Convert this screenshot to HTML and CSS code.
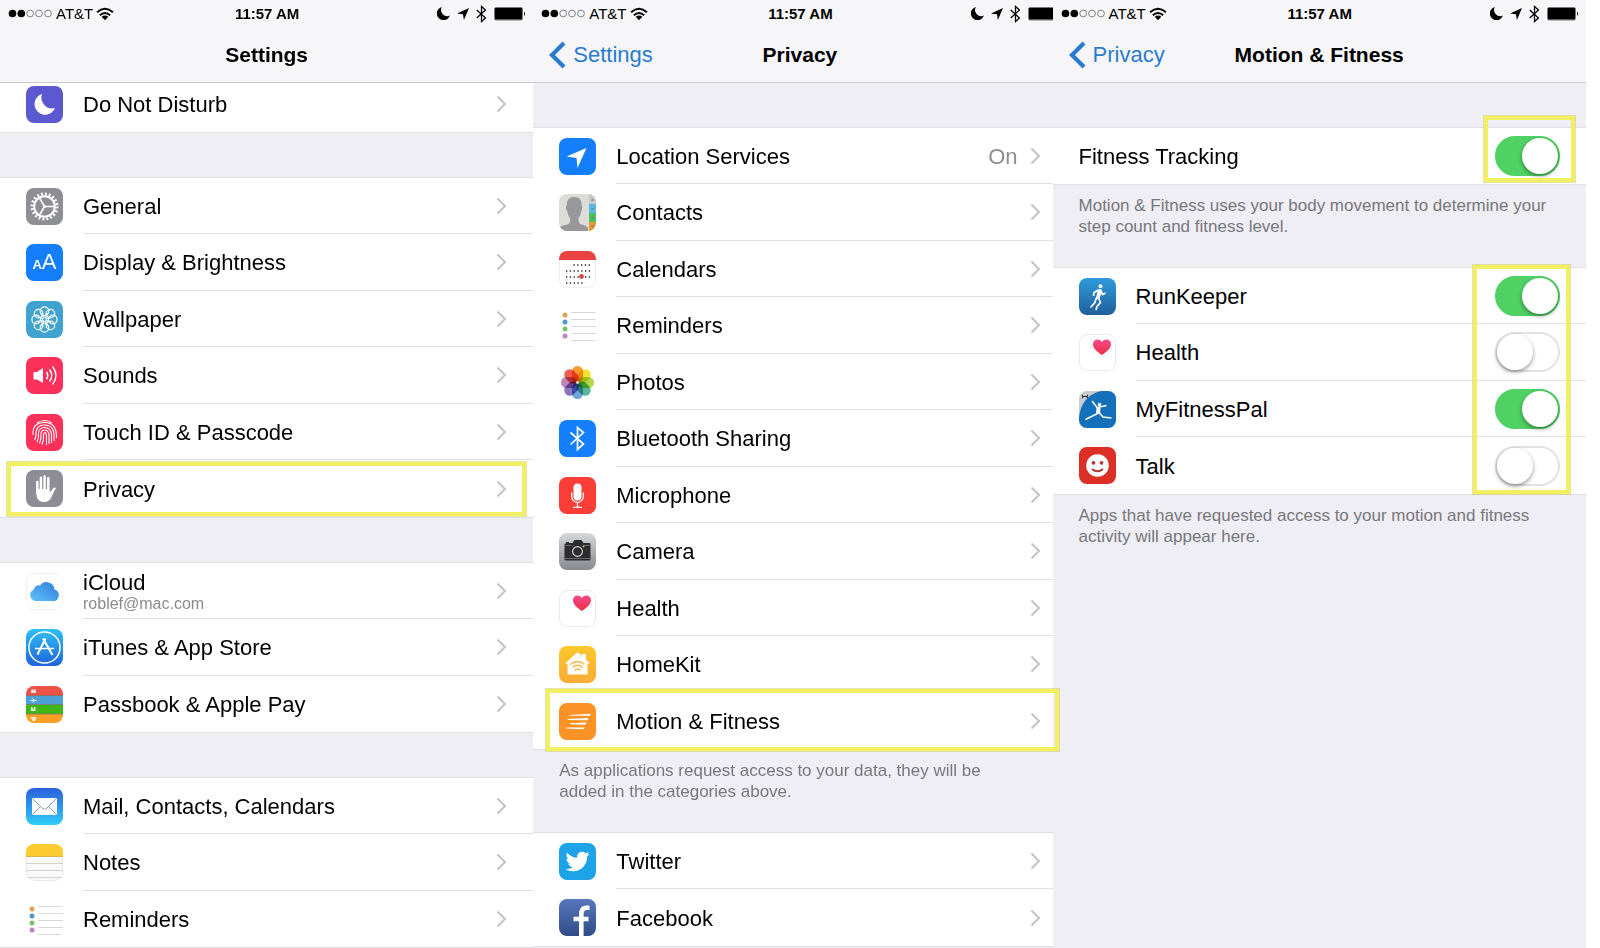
FILE: index.html
```html
<!DOCTYPE html>
<html lang="en">
<head>
    <meta charset="UTF-8">
    <meta name="viewport" content="width=device-width, initial-scale=1.0">
    <title>Motion &amp; Fitness settings</title>
    <link rel="stylesheet" href="styles.css">
</head>
<body>
    <!-- shared icons -->
    <svg class="sprite" aria-hidden="true">
        <defs>
            <linearGradient id="g-cloud" x1="0" y1="1" x2="1" y2="0">
                <stop offset="0" stop-color="#62c0f5"/><stop offset="1" stop-color="#2f7de0"/>
            </linearGradient>
            <linearGradient id="g-store" x1="0" y1="0" x2="0" y2="1">
                <stop offset="0" stop-color="#2fc0f2"/><stop offset="1" stop-color="#2063dc"/>
            </linearGradient>
            <linearGradient id="g-mail" x1="0" y1="0" x2="0" y2="1">
                <stop offset="0" stop-color="#2a5fdc"/><stop offset="1" stop-color="#2fcdf7"/>
            </linearGradient>
            <linearGradient id="g-camera" x1="0" y1="0" x2="0" y2="1">
                <stop offset="0" stop-color="#d6d7da"/><stop offset="1" stop-color="#88898e"/>
            </linearGradient>
            <linearGradient id="g-heart" x1="0" y1="0" x2="0" y2="1">
                <stop offset="0" stop-color="#fb4a8c"/><stop offset="1" stop-color="#e92f45"/>
            </linearGradient>
            <linearGradient id="g-home" x1="0" y1="0" x2="0" y2="1">
                <stop offset="0" stop-color="#fac92c"/><stop offset="1" stop-color="#fbab35"/>
            </linearGradient>
            <linearGradient id="g-fb" x1="0" y1="0" x2="0" y2="1">
                <stop offset="0" stop-color="#5878bd"/><stop offset="1" stop-color="#304c88"/>
            </linearGradient>
            <linearGradient id="g-run" x1="0" y1="0" x2="0" y2="1">
                <stop offset="0" stop-color="#2f9bdc"/><stop offset="1" stop-color="#215f9c"/>
            </linearGradient>
        </defs>
        <symbol id="dots" viewBox="0 0 45 9">
            <circle cx="4.5" cy="4.5" r="3.8"/><circle cx="13.3" cy="4.5" r="3.8"/>
            <g fill="none" stroke="#555" stroke-width=".7"><circle cx="22.2" cy="4.5" r="3.4"/><circle cx="31" cy="4.5" r="3.4"/><circle cx="40" cy="4.5" r="3.4"/></g>
        </symbol>
        <symbol id="wifi" viewBox="0 0 17 13">
            <path d="M1 4.8Q8.500-1.700 16 4.800M3.600 7.600Q8.500 3.300 13.400 7.600" fill="none" stroke="#000" stroke-width="1.800"/>
            <path d="M5.400 9.200Q8.500 6.700 11.600 9.200L8.500 12.500z"/>
        </symbol>
        <symbol id="moon" viewBox="0 0 20 20">
            <path d="M7.500 0A9.500 9.500 0 0 0 19.800 13.200A10.300 10.300 0 1 1 7.500 0z"/>
        </symbol>
        <symbol id="arrow" viewBox="0 0 20 20">
            <path d="M20 0L11.500 20L10 10.500L0 9z"/>
        </symbol>
        <symbol id="bt" viewBox="0 0 14 22">
            <path d="M1 6L12 16L7 20.500V1.500L12 6L1 16" fill="none" stroke="currentColor" stroke-width="1.600"/>
        </symbol>
        <symbol id="battery" viewBox="0 0 32 14">
            <rect x=".5" y=".5" width="28" height="12.500" rx="1.500" fill="#fff" stroke="#777"/>
            <rect x="1" y="1" width="27" height="11.500" rx=".5"/>
            <path d="M30 4.500q2 2.200 0 4.500z"/>
        </symbol>
        <symbol id="back" viewBox="0 0 17 28">
            <path d="M15 2L3 14L15 26" fill="none" stroke="currentColor" stroke-width="4.200"/>
        </symbol>
        <symbol id="chevron" viewBox="0 0 11 18">
            <path d="M1.500 1.500L9 9L1.500 16.500" fill="none" stroke="#c3c3c8" stroke-width="2"/>
        </symbol>

        <symbol id="i-dnd" viewBox="0 0 37 37">
            <rect width="37" height="37" fill="#5b58d0"/>
            <path d="M16 8A10.800 10.800 0 0 0 29 22A10.600 10.600 0 1 1 16 8z" fill="#fff"/>
        </symbol>
        <symbol id="i-general" viewBox="0 0 37 37">
            <rect width="37" height="37" fill="#8e8e95"/>
            <g fill="none" stroke="#fff">
                <circle cx="18.500" cy="18.500" r="12.600" stroke-width="2.800" stroke-dasharray="1.900 2.060"/>
                <circle cx="18.500" cy="18.500" r="10.300" stroke-width="2"/>
                <path d="M18.500 18.500H29M18.500 18.500L13.200 9.300M18.500 18.500L13.200 27.700" stroke-width="1.600"/>
            </g>
            <circle cx="18.500" cy="18.500" r="1.600" fill="#fff"/>
        </symbol>
        <symbol id="i-wallpaper" viewBox="0 0 37 37">
            <rect width="37" height="37" fill="#40a3cf"/>
            <g fill="none" stroke="#fff" stroke-width="1.200">
                <circle cx="18.500" cy="10.200" r="4.300"/><circle cx="24.400" cy="12.600" r="4.300"/>
                <circle cx="26.800" cy="18.500" r="4.300"/><circle cx="24.400" cy="24.400" r="4.300"/>
                <circle cx="18.500" cy="26.800" r="4.300"/><circle cx="12.600" cy="24.400" r="4.300"/>
                <circle cx="10.200" cy="18.500" r="4.300"/><circle cx="12.600" cy="12.600" r="4.300"/>
                <circle cx="18.500" cy="18.500" r="2"/>
                <path d="M15 12L17.700 16.600M22 12L19.300 16.600M15 25L17.700 20.400M22 25L19.300 20.400M12 15L16.600 17.700M12 22L16.600 19.300M25 15L20.400 17.700M25 22L20.400 19.300"/>
            </g>
        </symbol>
        <symbol id="i-sounds" viewBox="0 0 37 37">
            <rect width="37" height="37" fill="#fb3159"/>
            <path d="M7.500 15H11L17 11V26L11 22.500H7.500z" fill="#fff"/>
            <g fill="none" stroke="#fff" stroke-width="1.500">
                <path d="M20.500 15q2.500 3.500 0 7"/><path d="M23.500 12.500q4.500 6 0 12"/><path d="M26.500 9.500q7 9 0 18"/>
            </g>
        </symbol>
        <symbol id="i-touch" viewBox="0 0 37 37">
            <rect width="37" height="37" fill="#fb3159"/>
            <g fill="none" stroke="#fff" stroke-width="1.100">
                <path d="M11 9Q18.500 4 26 9"/>
                <path d="M7 21Q6 8.500 18.500 8.500Q31 8.500 30.500 24"/>
                <path d="M8.500 26Q10.500 23 10 18.500Q10.500 11 18.500 11Q27.500 11 28 20V27"/>
                <path d="M11 28Q13 24 12.500 19Q13 13.500 18.500 13.500Q25 13.500 25.500 21V29"/>
                <path d="M13.500 29.500Q15.500 25 15 19.500Q15.500 16 18.500 16Q22.500 16 23 21V30"/>
                <path d="M16 30.500Q18 26 17.500 20.500Q18 18.500 19 18.500Q20.500 19 20.500 22V31"/>
            </g>
        </symbol>
        <symbol id="i-privacy" viewBox="0 0 37 37">
            <rect width="37" height="37" fill="#8e8c95"/>
            <g fill="none" stroke="#fff" stroke-width="2.500" stroke-linecap="round">
                <path d="M11.300 12V22M14.900 7.800V20M18.600 6.500V20M22.300 8.300V22"/>
            </g>
            <path d="M10 19H23.500V23L27 18.500Q28.500 17 30 18Q27.500 22 25.500 27Q23.500 32 18 32Q12 32 10.500 26z" fill="#fff"/>
        </symbol>
        <symbol id="i-cloud" viewBox="0 0 37 37">
            <rect x=".5" y=".5" width="36" height="36" rx="8" fill="#fff" stroke="#f1f1f3"/>
            <path d="M9.500 28A6 6 0 0 1 7.500 16.700A5.500 5.500 0 0 1 14 12.500A8 8 0 0 1 28.500 16.500A6 6 0 0 1 28.500 28z" fill="url(#g-cloud)"/>
        </symbol>
        <symbol id="i-store" viewBox="0 0 37 37">
            <rect width="37" height="37" fill="url(#g-store)"/>
            <g fill="none" stroke="#fff">
                <circle cx="18.500" cy="18.500" r="15.600" stroke-width="1.500"/>
                <path d="M19.500 9.500L11.500 25.500M17 9.500L26.500 26" stroke-width="2"/>
                <path d="M9 19.500H28" stroke-width="1.700"/>
            </g>
        </symbol>
        <symbol id="i-passbook" viewBox="0 0 37 37">
            <rect width="37" height="10" fill="#ee5148"/><rect y="10" width="37" height="9" fill="#4d9fd4"/>
            <rect y="19" width="37" height="10" fill="#3fb615"/><rect y="28" width="37" height="9" fill="#fb9f27"/>
            <path d="M0 9.500H37M0 18.500H37M0 28H37" stroke="#85766a" stroke-width=".8"/>
            <g fill="#fff" opacity=".8">
                <path d="M5 3.500H10V7H5zM4 14H7L6 11.500L9 14H11V15H9L6.500 17L7 15H4zM5 25V21H6.500V22.500H8V21H9.500V25zM4.500 31H10.500L9 35H6.500z"/>
            </g>
        </symbol>
        <symbol id="i-mail" viewBox="0 0 37 37">
            <rect width="37" height="37" fill="url(#g-mail)"/>
            <rect x="6" y="10" width="25" height="17" rx="1" fill="#fff"/>
            <path d="M6.500 10.500L16.500 20.500Q18.500 22 20.500 20.500L30.500 10.500M6.500 26.500L14.500 18.500M30.500 26.500L22.500 18.500" fill="none" stroke="#7692aa" stroke-width=".9"/>
        </symbol>
        <symbol id="i-notes" viewBox="0 0 37 37">
            <rect x=".5" y=".5" width="36" height="36" rx="8" fill="#f9f9f9" stroke="#e9e9e9"/>
            <rect width="37" height="12" fill="#fccb2f"/>
            <path d="M0 12.500H37" stroke="#d9b448"/>
            <path d="M0 19.500H37M0 26.500H37M0 33.500H37" stroke="#d2d2d2"/>
        </symbol>
        <symbol id="i-reminders" viewBox="0 0 37 37">
            <circle cx="6" cy="8" r="2.500" fill="#dca64e"/><circle cx="6" cy="15" r="2.500" fill="#4b9cca"/>
            <circle cx="6" cy="22" r="2.500" fill="#7ac169"/><circle cx="6" cy="29" r="2.500" fill="#b58ac1"/>
            <path d="M12 5.500H37M12 12.500H37M12 19.500H37M12 26.500H37M12 33.500H37" stroke="#d8d8da"/>
        </symbol>
        <symbol id="i-location" viewBox="0 0 37 37">
            <rect width="37" height="37" fill="#157efb"/>
            <path d="M27.500 10L18.500 30L17.500 20L7.500 18.500z" fill="#fff"/>
        </symbol>
        <symbol id="i-contacts" viewBox="0 0 37 37">
            <rect width="37" height="37" fill="#dcdcd9"/>
            <rect x="30" width="7" height="10" fill="#c7c9c4"/><rect x="30" y="10" width="7" height="9" fill="#5ab8e8"/>
            <rect x="30" y="19" width="7" height="9" fill="#4bc05c"/><rect x="30" y="28" width="7" height="9" fill="#e69b32"/>
            <path d="M32.500 6h2M32.500 14.500h2M32.500 23.500h2M32.500 32h2" stroke="#777" stroke-width="1.500"/>
            <path d="M1 37V33.500Q2 31.500 9 30.500Q11 30 11 27V24Q8.500 21 8 16H7Q6 13 8 11Q7.500 3 15 3Q23 3 22.500 11Q24 13 22.500 16.500Q22 21 19.500 24V27Q20 30 22 30.500Q28 31.500 29 34V37z" fill="#98989a"/>
        </symbol>
        <symbol id="i-calendar" viewBox="0 0 37 37">
            <rect x=".5" y=".5" width="36" height="36" rx="8" fill="#fff" stroke="#ededed"/>
            <rect width="37" height="9" fill="#e84340"/>
            <g fill="none" stroke="#222" stroke-width="1.300" stroke-dasharray="1.300 2.500">
                <path d="M14.400 14H32M7 20H32M7 26H32M7 32H25"/>
            </g>
            <circle cx="22.500" cy="25.500" r="2.400" fill="#d34a4c"/>
        </symbol>
        <symbol id="i-photos" viewBox="0 0 37 37">
            <g class="petals">
                <rect x="13" y="2" width="11" height="16" rx="5.500" fill="#f79a2f"/>
                <rect x="13" y="2" width="11" height="16" rx="5.500" fill="#f1e02e" transform="rotate(45 18.500 18.500)"/>
                <rect x="13" y="2" width="11" height="16" rx="5.500" fill="#b2d64c" transform="rotate(90 18.500 18.500)"/>
                <rect x="13" y="2" width="11" height="16" rx="5.500" fill="#59b996" transform="rotate(135 18.500 18.500)"/>
                <rect x="13" y="2" width="11" height="16" rx="5.500" fill="#6ea3dc" transform="rotate(180 18.500 18.500)"/>
                <rect x="13" y="2" width="11" height="16" rx="5.500" fill="#8a76bd" transform="rotate(225 18.500 18.500)"/>
                <rect x="13" y="2" width="11" height="16" rx="5.500" fill="#bf84b9" transform="rotate(270 18.500 18.500)"/>
                <rect x="13" y="2" width="11" height="16" rx="5.500" fill="#ef5d50" transform="rotate(315 18.500 18.500)"/>
            </g>
            <circle cx="18.500" cy="18.500" r="1.300" fill="#fff"/>
        </symbol>
        <symbol id="i-bluetooth" viewBox="0 0 37 37">
            <rect width="37" height="37" fill="#157efb"/>
            <path d="M11.500 12.500L24.500 24L18.500 29.500V7.500L24.500 12.500L11.500 24.500" fill="none" stroke="#fff" stroke-width="1.700"/>
        </symbol>
        <symbol id="i-mic" viewBox="0 0 37 37">
            <rect width="37" height="37" fill="#fb3d38"/>
            <rect x="14.500" y="6.500" width="8" height="17" rx="4" fill="#fff"/>
            <path d="M12.700 15.500V19.500A5.800 5.800 0 0 0 24.300 19.500V15.500M18.500 25.500V30M14 30.300H23" fill="none" stroke="#fff" stroke-width="1.300"/>
        </symbol>
        <symbol id="i-camera" viewBox="0 0 37 37">
            <rect width="37" height="37" fill="url(#g-camera)"/>
            <path d="M6 10.500H7V9H10V10H13.500L15.500 7H22.500L24.500 10H30.500Q31.500 10 31.500 11.500V26Q31.500 27.500 30 27.500H7Q5.500 27.500 5.500 26V11.500z" fill="#2c2c2e"/>
            <path d="M5.500 12.500H12.500M24.500 12.500H31.500M5.500 25.500H31.500" stroke="#77787b" stroke-width=".8"/>
            <circle cx="18.500" cy="18.500" r="6.200" fill="#2c2c2e"/>
            <circle cx="18.500" cy="18.500" r="4.900" fill="none" stroke="#dedede" stroke-width="1.100"/>
            <circle cx="24.500" cy="13.500" r=".9" fill="#e5bd42"/>
        </symbol>
        <symbol id="i-health" viewBox="0 0 37 37">
            <rect x=".5" y=".5" width="36" height="36" rx="8" fill="#fff" stroke="#e8e8ea"/>
            <path d="M22.800 21C17 17 14 14 14 10.300C14 5 20.500 3.800 22.800 8C25.500 3.800 32 5 32 10.300C32 14 28.500 17.500 22.800 21z" fill="url(#g-heart)"/>
        </symbol>
        <symbol id="i-home" viewBox="0 0 37 37">
            <rect width="37" height="37" fill="url(#g-home)"/>
            <path d="M18.500 6L23 10V8H27V13.500L31 17.500H28.500V28.500H8.500V17.500H6z" fill="#fff"/>
            <path d="M11.500 18.500Q18.500 12.500 25.500 18.500M13.500 21.500Q18.500 17 23.500 21.500M15.500 24.500Q18.500 21.500 21.500 24.500" fill="none" stroke="#f8b540" stroke-width="1.300"/>
        </symbol>
        <symbol id="i-motion" viewBox="0 0 37 37">
            <rect width="37" height="37" fill="#fb9226"/>
            <path d="M10.500 12L32 10.800L31 12.800L10.500 12.800zM8.500 16L29.500 15L28.500 17.200L8.500 17zM11 20.300L27.500 19.500L26.500 21.700L11 21.200zM7 24.400H25.500L24.500 26.300L7 25.400z" fill="#fff"/>
        </symbol>
        <symbol id="i-twitter" viewBox="0 0 37 37">
            <rect width="37" height="37" fill="#1ea3e8"/>
            <path transform="translate(6.500 6.500)" d="M23.954 4.569c-.885.389-1.830.654-2.825.775 1.014-.611 1.794-1.574 2.163-2.723-.951.555-2.005.959-3.127 1.184-.896-.959-2.173-1.559-3.591-1.559-2.717 0-4.920 2.203-4.920 4.917 0 .390.045.765.127 1.124C7.691 8.094 4.066 6.130 1.640 3.161c-.427.722-.666 1.561-.666 2.475 0 1.710.870 3.213 2.188 4.096-.807-.026-1.566-.248-2.228-.616v.061c0 2.385 1.693 4.374 3.946 4.827-.413.111-.849.171-1.296.171-.314 0-.615-.030-.916-.086.631 1.953 2.445 3.377 4.604 3.417-1.680 1.319-3.809 2.105-6.102 2.105-.390 0-.779-.023-1.170-.067 2.189 1.394 4.768 2.209 7.557 2.209 9.054 0 13.999-7.496 13.999-13.986 0-.209 0-.420-.015-.630.961-.689 1.800-1.560 2.460-2.548z" fill="#fff"/>
        </symbol>
        <symbol id="i-facebook" viewBox="0 0 37 37">
            <rect width="37" height="37" fill="url(#g-fb)"/>
            <path d="M22.300 37V15.500Q22.300 8.700 27.500 8.700H30.500M14.500 20H29.500" fill="none" stroke="#fff" stroke-width="4.600"/>
        </symbol>
        <symbol id="i-runkeeper" viewBox="0 0 37 37">
            <rect width="37" height="37" fill="url(#g-run)"/>
            <circle cx="21.500" cy="8.300" r="2" fill="#fff"/>
            <path d="M18 11.500L22.500 11L22 16L20.500 21H16.500L18 16z" fill="#fff"/>
            <path d="M18.500 12.500L15 14.500L14.500 18M22 12.500L23.500 16.500L26.500 15M17.500 20L15.500 25L11.500 29.500M19.500 20L21.500 24.500L18 28.500L17 32" fill="none" stroke="#fff" stroke-width="1.700"/>
        </symbol>
        <symbol id="i-mfp" viewBox="0 0 37 37">
            <rect width="37" height="37" fill="#c9cbce"/>
            <path d="M0 37V27Q2 5 22 0H37V37z" fill="#1470ba"/>
            <path d="M3 4Q5 6 3 7M9 4Q7 6 9 7M4 5.500H8" fill="none" stroke="#333" stroke-width="1.200"/>
            <circle cx="20.500" cy="13.500" r="1.700" fill="#fff"/>
            <path d="M13 10L18 16.500L27.500 14.500M19.500 16L19.500 22L6.500 28.500M20 21.500L24 26L32.500 27" fill="none" stroke="#fff" stroke-width="1.500"/>
            <path d="M17.500 16.500H21.500L21 23H17z" fill="#fff"/>
        </symbol>
        <symbol id="i-talk" viewBox="0 0 37 37">
            <rect width="37" height="37" fill="#dc2f27"/>
            <circle cx="18.500" cy="18.500" r="11.300" fill="#fff"/>
            <circle cx="14.500" cy="15.800" r="1.900" fill="#b23a38"/><circle cx="22.500" cy="15.800" r="1.900" fill="#b23a38"/>
            <path d="M13 22Q18.500 26.500 24 22" fill="none" stroke="#b23a38" stroke-width="2"/>
        </symbol>
    </svg>

    <!-- Settings -->
    <section class="panel">
        <header class="topbar">
            <div class="status">
                <div class="carrier"><svg class="dots"><use href="#dots"/></svg>AT&amp;T<svg class="wifi"><use href="#wifi"/></svg></div>
                <div class="time">11:57 AM</div>
                <div class="indicators"><svg class="moon"><use href="#moon"/></svg><svg class="arrow"><use href="#arrow"/></svg><svg class="bt"><use href="#bt"/></svg><svg class="battery"><use href="#battery"/></svg></div>
            </div>
            <div class="nav"><h1>Settings</h1></div>
        </header>
        <nav class="group scrolled">
            <a class="row" href="#"><svg class="icon"><use href="#i-dnd"/></svg><span class="row-body"><span>Do Not Disturb</span><svg class="chevron"><use href="#chevron"/></svg></span></a>
        </nav>
        <nav class="group">
            <a class="row" href="#"><svg class="icon"><use href="#i-general"/></svg><span class="row-body"><span>General</span><svg class="chevron"><use href="#chevron"/></svg></span></a>
            <a class="row" href="#"><span class="icon icon-display" aria-hidden="true"><small>A</small>A</span><span class="row-body"><span>Display &amp; Brightness</span><svg class="chevron"><use href="#chevron"/></svg></span></a>
            <a class="row" href="#"><svg class="icon"><use href="#i-wallpaper"/></svg><span class="row-body"><span>Wallpaper</span><svg class="chevron"><use href="#chevron"/></svg></span></a>
            <a class="row" href="#"><svg class="icon"><use href="#i-sounds"/></svg><span class="row-body"><span>Sounds</span><svg class="chevron"><use href="#chevron"/></svg></span></a>
            <a class="row" href="#"><svg class="icon"><use href="#i-touch"/></svg><span class="row-body"><span>Touch ID &amp; Passcode</span><svg class="chevron"><use href="#chevron"/></svg></span></a>
            <a class="row marked mark-privacy" href="#"><svg class="icon"><use href="#i-privacy"/></svg><span class="row-body"><span>Privacy</span><svg class="chevron"><use href="#chevron"/></svg></span></a>
        </nav>
        <nav class="group">
            <a class="row" href="#"><svg class="icon"><use href="#i-cloud"/></svg><span class="row-body"><span class="stack">iCloud<small>roblef@mac.com</small></span><svg class="chevron"><use href="#chevron"/></svg></span></a>
            <a class="row" href="#"><svg class="icon"><use href="#i-store"/></svg><span class="row-body"><span>iTunes &amp; App Store</span><svg class="chevron"><use href="#chevron"/></svg></span></a>
            <a class="row" href="#"><svg class="icon"><use href="#i-passbook"/></svg><span class="row-body"><span>Passbook &amp; Apple Pay</span><svg class="chevron"><use href="#chevron"/></svg></span></a>
        </nav>
        <nav class="group">
            <a class="row" href="#"><svg class="icon"><use href="#i-mail"/></svg><span class="row-body"><span>Mail, Contacts, Calendars</span><svg class="chevron"><use href="#chevron"/></svg></span></a>
            <a class="row" href="#"><svg class="icon"><use href="#i-notes"/></svg><span class="row-body"><span>Notes</span><svg class="chevron"><use href="#chevron"/></svg></span></a>
            <a class="row" href="#"><svg class="icon"><use href="#i-reminders"/></svg><span class="row-body"><span>Reminders</span><svg class="chevron"><use href="#chevron"/></svg></span></a>
        </nav>
    </section>

    <!-- Privacy -->
    <section class="panel">
        <header class="topbar">
            <div class="status">
                <div class="carrier"><svg class="dots"><use href="#dots"/></svg>AT&amp;T<svg class="wifi"><use href="#wifi"/></svg></div>
                <div class="time">11:57 AM</div>
                <div class="indicators"><svg class="moon"><use href="#moon"/></svg><svg class="arrow"><use href="#arrow"/></svg><svg class="bt"><use href="#bt"/></svg><svg class="battery"><use href="#battery"/></svg></div>
            </div>
            <div class="nav"><a class="back" href="#"><svg><use href="#back"/></svg>Settings</a><h1>Privacy</h1></div>
        </header>
        <nav class="group">
            <a class="row" href="#"><svg class="icon"><use href="#i-location"/></svg><span class="row-body"><span>Location Services</span><span class="value">On</span><svg class="chevron"><use href="#chevron"/></svg></span></a>
            <a class="row" href="#"><svg class="icon"><use href="#i-contacts"/></svg><span class="row-body"><span>Contacts</span><svg class="chevron"><use href="#chevron"/></svg></span></a>
            <a class="row" href="#"><svg class="icon"><use href="#i-calendar"/></svg><span class="row-body"><span>Calendars</span><svg class="chevron"><use href="#chevron"/></svg></span></a>
            <a class="row" href="#"><svg class="icon"><use href="#i-reminders"/></svg><span class="row-body"><span>Reminders</span><svg class="chevron"><use href="#chevron"/></svg></span></a>
            <a class="row" href="#"><svg class="icon"><use href="#i-photos"/></svg><span class="row-body"><span>Photos</span><svg class="chevron"><use href="#chevron"/></svg></span></a>
            <a class="row" href="#"><svg class="icon"><use href="#i-bluetooth"/></svg><span class="row-body"><span>Bluetooth Sharing</span><svg class="chevron"><use href="#chevron"/></svg></span></a>
            <a class="row" href="#"><svg class="icon"><use href="#i-mic"/></svg><span class="row-body"><span>Microphone</span><svg class="chevron"><use href="#chevron"/></svg></span></a>
            <a class="row" href="#"><svg class="icon"><use href="#i-camera"/></svg><span class="row-body"><span>Camera</span><svg class="chevron"><use href="#chevron"/></svg></span></a>
            <a class="row" href="#"><svg class="icon"><use href="#i-health"/></svg><span class="row-body"><span>Health</span><svg class="chevron"><use href="#chevron"/></svg></span></a>
            <a class="row" href="#"><svg class="icon"><use href="#i-home"/></svg><span class="row-body"><span>HomeKit</span><svg class="chevron"><use href="#chevron"/></svg></span></a>
            <a class="row marked mark-motion" href="#"><svg class="icon"><use href="#i-motion"/></svg><span class="row-body"><span>Motion &amp; Fitness</span><svg class="chevron"><use href="#chevron"/></svg></span></a>
        </nav>
        <p class="note">As applications request access to your data, they will be<br>added in the categories above.</p>
        <nav class="group">
            <a class="row" href="#"><svg class="icon"><use href="#i-twitter"/></svg><span class="row-body"><span>Twitter</span><svg class="chevron"><use href="#chevron"/></svg></span></a>
            <a class="row" href="#"><svg class="icon"><use href="#i-facebook"/></svg><span class="row-body"><span>Facebook</span><svg class="chevron"><use href="#chevron"/></svg></span></a>
        </nav>
    </section>

    <!-- Motion & Fitness -->
    <section class="panel">
        <header class="topbar">
            <div class="status">
                <div class="carrier"><svg class="dots"><use href="#dots"/></svg>AT&amp;T<svg class="wifi"><use href="#wifi"/></svg></div>
                <div class="time">11:57 AM</div>
                <div class="indicators"><svg class="moon"><use href="#moon"/></svg><svg class="arrow"><use href="#arrow"/></svg><svg class="bt"><use href="#bt"/></svg><svg class="battery"><use href="#battery"/></svg></div>
            </div>
            <div class="nav"><a class="back" href="#"><svg><use href="#back"/></svg>Privacy</a><h1>Motion &amp; Fitness</h1></div>
        </header>
        <div class="group marked mark-tracking">
            <div class="row"><span class="row-body"><label for="tracking">Fitness Tracking</label><input class="switch" type="checkbox" id="tracking" checked></span></div>
        </div>
        <p class="note">Motion &amp; Fitness uses your body movement to determine your<br>step count and fitness level.</p>
        <div class="group marked mark-apps">
            <div class="row"><svg class="icon"><use href="#i-runkeeper"/></svg><span class="row-body"><label for="runkeeper">RunKeeper</label><input class="switch" type="checkbox" id="runkeeper" checked></span></div>
            <div class="row"><svg class="icon"><use href="#i-health"/></svg><span class="row-body"><label for="health">Health</label><input class="switch" type="checkbox" id="health"></span></div>
            <div class="row"><svg class="icon"><use href="#i-mfp"/></svg><span class="row-body"><label for="myfitnesspal">MyFitnessPal</label><input class="switch" type="checkbox" id="myfitnesspal" checked></span></div>
            <div class="row"><svg class="icon"><use href="#i-talk"/></svg><span class="row-body"><label for="talk">Talk</label><input class="switch" type="checkbox" id="talk"></span></div>
        </div>
        <p class="note">Apps that have requested access to your motion and fitness<br>activity will appear here.</p>
    </section>
</body>
</html>
```
FILE: styles.css
```css
*,
*::before,
*::after {
    box-sizing: border-box;
}
body {
    margin: 0;
    display: flex;
    min-height: 100vh;
    overflow: hidden;
    background-color: #fff;
    color: #000;
    font-family: "Liberation Sans", Arial, sans-serif;
    font-size: 22px;
}
a {
    color: inherit;
    text-decoration: none;
}
svg {
    flex: none;
}
.sprite {
    position: absolute;
    width: 0;
    height: 0;
}
.panel {
    flex: 0 0 33.33%;
    background-color: #efeef4;
}
/* the last screen covers the right edge of the middle one */
.panel:last-child {
    margin-left: -14px;
}

/* status bar and title */
.topbar {
    position: relative;
    z-index: 1;
    height: 83px;
    background-color: #f6f6f8;
    border-bottom: 1px solid #cbcbcf;
}
.status {
    display: grid;
    grid-template-columns: 1fr auto 1fr;
    align-items: center;
    height: 27px;
    padding: 0 7px 0 8px;
    font-size: 15px;
}
.carrier {
    display: flex;
    align-items: center;
    gap: 3px;
}
.time {
    font-weight: bold;
}
.indicators {
    display: flex;
    align-items: center;
    justify-content: flex-end;
    gap: 7px;
}
.dots {
    width: 45px;
    height: 9px;
}
.wifi {
    width: 18px;
    height: 14px;
}
.moon {
    width: 13px;
    height: 13px;
}
.arrow {
    width: 12px;
    height: 12px;
}
.bt {
    width: 11px;
    height: 18px;
}
.battery {
    width: 32px;
    height: 14px;
}
.nav {
    display: grid;
    grid-template-columns: 1fr auto 1fr;
    align-items: center;
    height: 55px;
    padding: 0 16px;
}
.nav h1 {
    grid-column: 2;
    margin: 0;
    font-size: 21px;
}
.back {
    display: flex;
    align-items: center;
    gap: 7px;
    color: #2a7bd0;
}
.back svg {
    width: 17px;
    height: 28px;
}

/* lists */
.group {
    margin-top: 46px;
    background-color: #fff;
    box-shadow: 0 -1px #dfdee3, 0 1px #dfdee3;
}
.topbar + .group {
    margin-top: 45px;
}
.topbar + .scrolled {
    margin-top: -7px;
}
.row {
    display: flex;
    align-items: center;
    height: 56px;
    padding-left: 26px;
}
.row:nth-child(even) {
    height: 57px;
}
.icon {
    width: 37px;
    height: 37px;
    margin-right: 20px;
    border-radius: 8px;
}
.icon-display {
    display: flex;
    align-items: baseline;
    justify-content: center;
    background-color: #157efb;
    color: #fff;
    line-height: 36px;
}
.icon-display small {
    font-size: 13px;
    font-weight: bold;
}
.row-body {
    display: flex;
    flex: 1;
    align-items: center;
    align-self: stretch;
    padding-right: 26px;
    border-bottom: 1px solid #e0e0e3;
}
.row:last-child .row-body {
    border-bottom: 0;
}
.row-body > :first-child {
    flex: 1;
    padding-top: 2px;
}
.stack {
    line-height: 24px;
}
.stack small {
    display: block;
    color: #8a8a8e;
    font-size: 16px;
    line-height: 18px;
}
.value {
    padding-top: 2px;
    margin-right: 12px;
    color: #8e8e93;
}
.chevron {
    width: 11px;
    height: 18px;
}
.note {
    margin: 0;
    padding: 11px 26px 31px;
    color: #77777c;
    font-size: 17px;
    line-height: 21px;
    white-space: nowrap;
}
.note + .group {
    margin-top: 0;
}
.petals rect {
    mix-blend-mode: multiply;
}

/* switches */
.switch {
    appearance: none;
    width: 65px;
    height: 40px;
    margin: 0;
    padding: 0;
    border: 2px solid #e3e3e5;
    border-radius: 20px;
    background-color: #fff;
}
.switch::before {
    content: "";
    display: block;
    width: 36px;
    height: 36px;
    border-radius: 50%;
    background-color: #fff;
    box-shadow: 0 2px 4px rgba(0, 0, 0, 0.4);
}
.switch:checked {
    border-color: #4fd164;
    background-color: #4fd164;
}
.switch:checked::before {
    margin-left: auto;
}

/* yellow marker boxes */
.marked {
    position: relative;
}
.marked::after {
    content: "";
    position: absolute;
    z-index: 2;
    border: 4px solid #f3ef62;
    outline: 1px solid rgba(205, 200, 90, 0.5);
    pointer-events: none;
}
.mark-privacy::after {
    inset: 2px 7px 1px 7px;
}
.mark-motion::after {
    inset: -4px 8px -2px 13px;
}
.mark-tracking::after {
    inset: -12px 11px 2px auto;
    width: 91px;
}
.mark-apps::after {
    inset: -3px 16px 0 auto;
    width: 97px;
}
```
